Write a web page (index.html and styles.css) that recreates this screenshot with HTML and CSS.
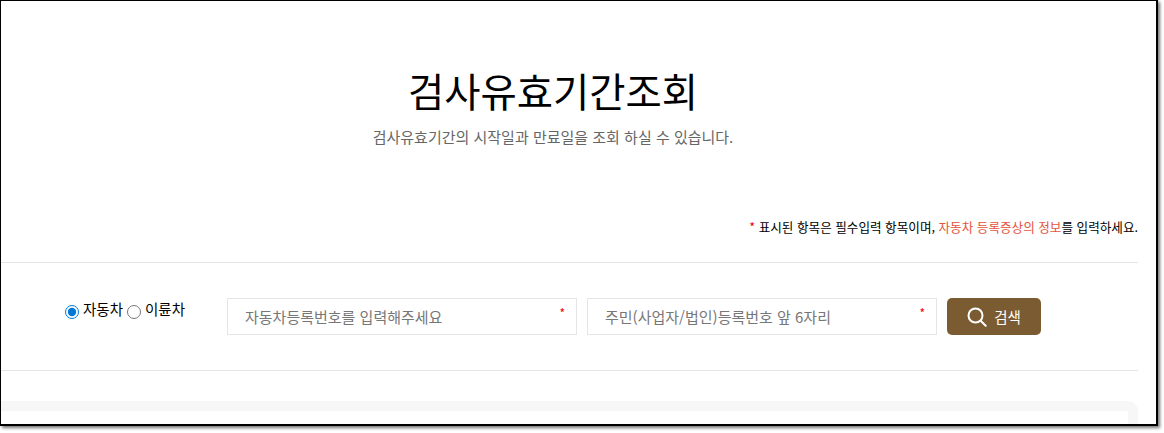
FILE: index.html
```html
<!DOCTYPE html>
<html lang="ko">
<head>
    <meta charset="utf-8">
    <title>검사유효기간조회</title>
    <link rel="stylesheet" href="styles.css">
</head>
<body>
    <div class="frame">
        <div class="page">
            <div class="head">
                <h1>검사유효기간조회</h1>
                <p class="sub">검사유효기간의 시작일과 만료일을 조회 하실 수 있습니다.</p>
            </div>

            <p class="notice"><span class="star">*</span> 표시된 항목은 필수입력 항목이며, <span class="red">자동차 등록증상의 정보</span>를 입력하세요.</p>

            <form class="search">
                <div class="radios">
                    <input type="radio" name="kind" id="car" checked>
                    <label for="car">자동차</label>
                    <input type="radio" name="kind" id="bike">
                    <label for="bike">이륜차</label>
                </div>
                <div class="field">
                    <input type="text" placeholder="자동차등록번호를 입력해주세요">
                    <span class="req">*</span>
                </div>
                <div class="field">
                    <input type="text" placeholder="주민(사업자/법인)등록번호 앞 6자리">
                    <span class="req">*</span>
                </div>
                <button type="button" class="btn">
                    <svg width="20" height="20" viewBox="0 0 20 20" fill="none" stroke="#fff" stroke-width="2" stroke-linecap="round"><circle cx="8.5" cy="8.5" r="7"/><path d="M13.7 13.7l5 5"/></svg>
                    검색
                </button>
            </form>

            <div class="card"><div class="card-in"></div></div>
        </div>
    </div>
</body>
</html>
```

FILE: styles.css
```css
html, body {
    margin: 0;
    height: 433px;
    overflow: hidden;
    background: #fff;
    font-family: "Noto Sans CJK KR", "Noto Sans", sans-serif;
}
.frame {
    box-sizing: border-box;
    width: 1158px;
    height: 426px;
    border: 1px solid #000;
    border-right-width: 2px;
    border-bottom-width: 2px;
    box-shadow: 2px 2px 3px #777;
    overflow: hidden;
    background: #fff;
}
.page {
    width: 1137px;
}
.head {
    padding: 59px 33px 0 0;
    text-align: center;
}
h1 {
    margin: 0;
    font-size: 39.4px;
    line-height: 60px;
    font-weight: 400;
    color: #000;
}
.sub {
    margin: 6px 0 0;
    font-size: 15px;
    line-height: 22px;
    color: #666;
}
.notice {
    margin: 69px 0 0;
    font-size: 12.6px;
    line-height: 20px;
    text-align: right;
    color: #000;
}
.star {
    color: #e00;
}
.red {
    color: #e5533d;
}
.search {
    display: flex;
    align-items: flex-start;
    height: 109px;
    margin-top: 25px;
    padding-top: 35px;
    box-sizing: border-box;
    border-top: 1px solid #e5e5e5;
    border-bottom: 1px solid #e5e5e5;
}
.radios {
    display: flex;
    align-items: center;
    width: 226px;
    padding-left: 63px;
    box-sizing: border-box;
    font-size: 14.5px;
    line-height: 22px;
    color: #000;
    white-space: nowrap;
}
.radios input {
    margin: 5px 4px 0 1px;
    width: 14px;
    height: 14px;
    accent-color: #0078d7;
}
.radios label {
    margin-right: 3px;
}
.field {
    position: relative;
    width: 350px;
    margin-right: 10px;
}
.field input {
    box-sizing: border-box;
    width: 100%;
    height: 37px;
    padding: 0 17px;
    border: 1px solid #e5e5e5;
    outline: none;
    font: inherit;
    font-size: 15px;
    background: #fff;
}
.field input::placeholder {
    color: #777;
}
.req {
    position: absolute;
    top: 6px;
    right: 12px;
    font-size: 12px;
    color: #e00;
}
.btn {
    display: flex;
    align-items: center;
    justify-content: center;
    gap: 7px;
    width: 94px;
    height: 37px;
    padding: 0;
    border: none;
    border-radius: 5px;
    background: #7b5c32;
    color: #fff;
    font: inherit;
    font-size: 14.5px;
}
.card {
    margin-top: 30px;
    height: 40px;
    padding: 10px 10px 0 0;
    background: #f7f7f7;
    border-radius: 0 10px 0 0;
    box-sizing: border-box;
}
.card-in {
    height: 30px;
    background: #fff;
}
```
